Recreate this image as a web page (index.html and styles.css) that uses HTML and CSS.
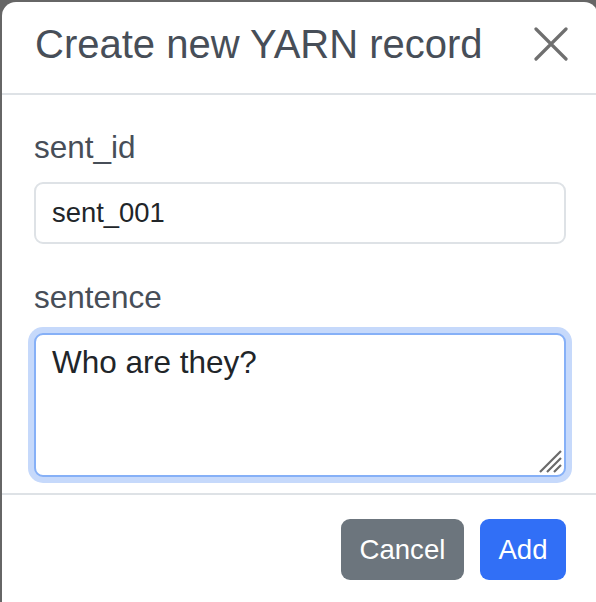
FILE: index.html
```html
<!DOCTYPE html>
<html lang="en">
<head>
<meta charset="utf-8">
<title>Create new YARN record</title>
<link rel="stylesheet" href="styles.css">
</head>
<body>
<div class="modal">
  <div class="modal-header">
    <h5 class="modal-title">Create new YARN record</h5>
    <button class="btn-close" type="button" aria-label="Close">
      <svg width="34" height="34" viewBox="0 0 34 34"><path d="M2 2L32 32M32 2L2 32" stroke="#6f6f6f" stroke-width="3.2" stroke-linecap="round" fill="none"/></svg>
    </button>
  </div>
  <div class="modal-body">
    <label class="form-label" for="sent_id">sent_id</label>
    <input class="form-control" id="sent_id" type="text" value="sent_001">
    <label class="form-label second" for="sentence">sentence</label>
    <div class="textarea-wrap">
      <textarea class="form-control focused" id="sentence">Who are they?</textarea>
      <svg class="grip" width="24" height="24" viewBox="0 0 24 24"><path d="M23 2L2 23M23 9L9 23M23 16L16 23" stroke="#6a6a6a" stroke-width="2.2" fill="none"/></svg>
    </div>
  </div>
  <div class="modal-footer">
    <button class="btn btn-secondary" type="button">Cancel</button>
    <button class="btn btn-primary" type="button">Add</button>
  </div>
</div>
</body>
</html>
```
FILE: styles.css
```css
html, body {
  margin: 0;
  padding: 0;
  background: #666666;
  height: 100%;
  overflow: hidden;
}

body {
  font-family: "Liberation Sans", Arial, sans-serif;
}

.modal {
  margin: 2px 0 0 2px;
  width: 596px;
  height: 620px;
  background: #ffffff;
  border-radius: 14px;
  box-sizing: border-box;
}

.modal-header {
  height: 93px;
  box-sizing: border-box;
  border-bottom: 2px solid #dee2e6;
  display: flex;
  align-items: center;
  justify-content: space-between;
  padding: 0 30px 8px 33px;
}

.modal-title {
  margin: 0;
  font-size: 40px;
  font-weight: 400;
  color: #474e58;
  line-height: 48px;
}

.btn-close {
  border: 0;
  background: transparent;
  padding: 0;
  width: 34px;
  height: 34px;
  display: flex;
}

.modal-body {
  padding: 28px 32px 16px 32px;
  display: flex;
  flex-direction: column;
}

.form-label {
  font-size: 31.5px;
  line-height: 48px;
  color: #474e58;
  margin-bottom: 11px;
}

.form-label.second {
  margin-top: 29px;
  margin-bottom: 12px;
}

.form-control {
  box-sizing: border-box;
  width: 532px;
  font-family: "Liberation Sans", Arial, sans-serif;
  font-size: 27.4px;
  color: #212529;
  border: 2px solid #dee2e6;
  border-radius: 9px;
  background: #fff;
  padding: 0 16px;
  margin: 0;
  outline: none;
}

input.form-control {
  height: 62px;
}

.textarea-wrap {
  position: relative;
  width: 532px;
  height: 144px;
}

textarea.form-control {
  display: block;
  height: 144px;
  resize: none;
  font-size: 31.5px;
  padding-top: 8px;
  line-height: 38px;
}

.form-control.focused {
  border-color: #86b0f7;
  box-shadow: 0 0 0 6px #c6d9fb;
}

.grip {
  position: absolute;
  right: 4px;
  bottom: 4px;
}

.modal-footer {
  border-top: 2px solid #dee2e6;
  display: flex;
  justify-content: flex-end;
  gap: 16px;
  padding: 24px 32px 0 0;
}

.btn {
  font-family: "Liberation Sans", Arial, sans-serif;
  font-size: 27.6px;
  height: 61px;
  padding: 0 18.5px;
  border: 0;
  border-radius: 9px;
  color: #fff;
}

.btn-secondary {
  background: #6c757d;
}

.btn-primary {
  background: #316ff6;
}
```
